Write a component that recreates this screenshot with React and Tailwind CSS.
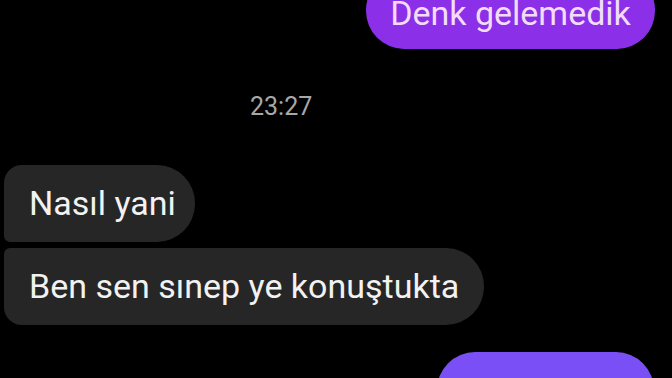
export default function App() {
  return (
    <div
      className="w-[672px] h-[378px] overflow-hidden bg-black flex flex-col"
      style={{ fontFamily: "Roboto, 'Noto Sans', sans-serif" }}
    >
      <div className="flex justify-end pr-[17px] -mt-[28px]">
        <div className="h-[77px] w-[289px] rounded-[38px] bg-[#8b2fe9] text-[#f3dcf7] text-[34px] flex items-center justify-center pt-[5px] whitespace-nowrap">
          Denk gelemedik
        </div>
      </div>
      <div className="flex justify-start pl-[250px] mt-[44px] h-[28px] items-center">
        <span className="text-[25px] text-[#a8a8a8]">23:27</span>
      </div>
      <div className="mt-[44px] pl-[4px] flex flex-col gap-[6px] items-start text-[#f2f2f2] text-[34px]">
        <div className="h-[77px] w-[191px] pl-[25px] flex items-center bg-[#262626] rounded-tl-[18px] rounded-bl-[6px] rounded-r-[38px] whitespace-nowrap">
          Nasıl yani
        </div>
        <div className="h-[77px] w-[480px] pl-[25px] flex items-center bg-[#262626] rounded-tl-[6px] rounded-bl-[18px] rounded-r-[38px] whitespace-nowrap">
          Ben sen sınep ye konuştukta
        </div>
      </div>
      <div className="mt-[27px] flex justify-end pr-[18px]">
        <div className="h-[77px] w-[217px] shrink-0 rounded-[38px] bg-[#7b4ff6] text-white text-[34px] flex items-center justify-center pt-[8px]">
          Yine de
        </div>
      </div>
    </div>
  );
}
